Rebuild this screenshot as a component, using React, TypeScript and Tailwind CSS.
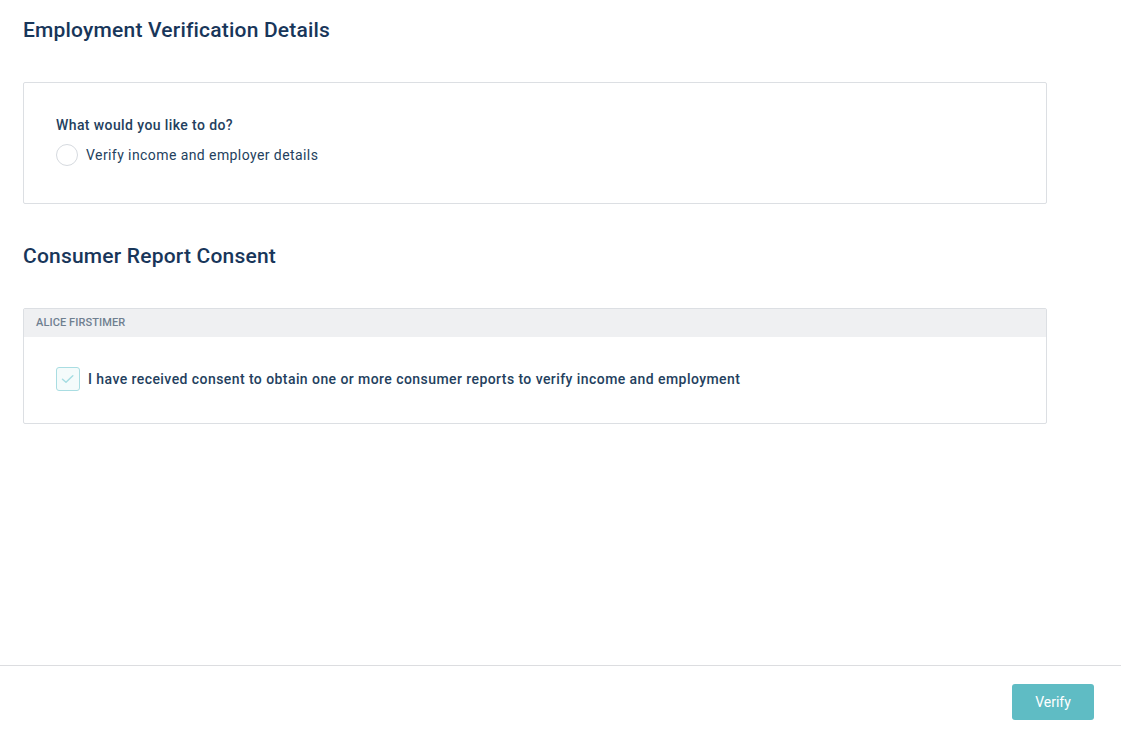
import React from "react";

export default function App() {
  return (
    <div className="min-h-[733px] w-[1121px] bg-white flex flex-col text-[#1e3a5a]" style={{ fontFamily: "Roboto, 'Liberation Sans', sans-serif" }}>
      <div className="flex-1 pl-[23px] pt-[16px]">
        <h1 className="text-[21px] leading-[28px] font-medium text-[#18365a] tracking-[0.2px]">Employment Verification Details</h1>
        <div className="mt-[38px] w-[1024px] h-[122px] border border-[#dcdfe3] rounded-[2px] px-[32px] pt-[33px]">
          <div className="text-[14px] leading-[18px] font-medium text-[#243f5e] tracking-[0.4px]">What would you like to do?</div>
          <label className="mt-[10px] flex items-center gap-[8px]">
            <span className="w-[22px] h-[22px] rounded-full border border-[#d6dadf] bg-white"></span>
            <span className="text-[14px] leading-[18px] text-[#243f5e] tracking-[0.42px]">Verify income and employer details</span>
          </label>
        </div>
        <h2 className="mt-[38px] text-[21px] leading-[28px] font-medium text-[#18365a] tracking-[0.2px]">Consumer Report Consent</h2>
        <div className="mt-[38px] w-[1024px] border border-[#dcdfe3] rounded-[2px]">
          <div className="h-[28px] bg-[#eff0f2] px-[12px] flex items-center text-[11px] font-medium text-[#6f7f90] tracking-[0.1px]">ALICE FIRSTIMER</div>
          <div className="h-[86px] px-[32px] pb-[2px] flex items-center gap-[8px]">
            <span className="w-[24px] h-[24px] rounded-[3px] border border-[#a9dde2] bg-[#f4fbfb] flex items-center justify-center">
              <svg width="16" height="16" viewBox="0 0 16 16" fill="none">
                <path d="M2.5 8.2 L6 11.3 L12.8 4.8" stroke="#a6dde2" strokeWidth="1.5" strokeLinecap="round" strokeLinejoin="round" />
              </svg>
            </span>
            <span className="text-[14px] leading-[18px] font-medium text-[#243f5e] tracking-[0.43px]">I have received consent to obtain one or more consumer reports to verify income and employment</span>
          </div>
        </div>
      </div>
      <div className="h-[68px] border-t border-[#dcdde0] flex items-start justify-end pr-[27px] pt-[18px]">
        <button className="w-[82px] h-[36px] rounded-[3px] bg-[#5fbcc4] text-white text-[14px]">Verify</button>
      </div>
    </div>
  );
}
